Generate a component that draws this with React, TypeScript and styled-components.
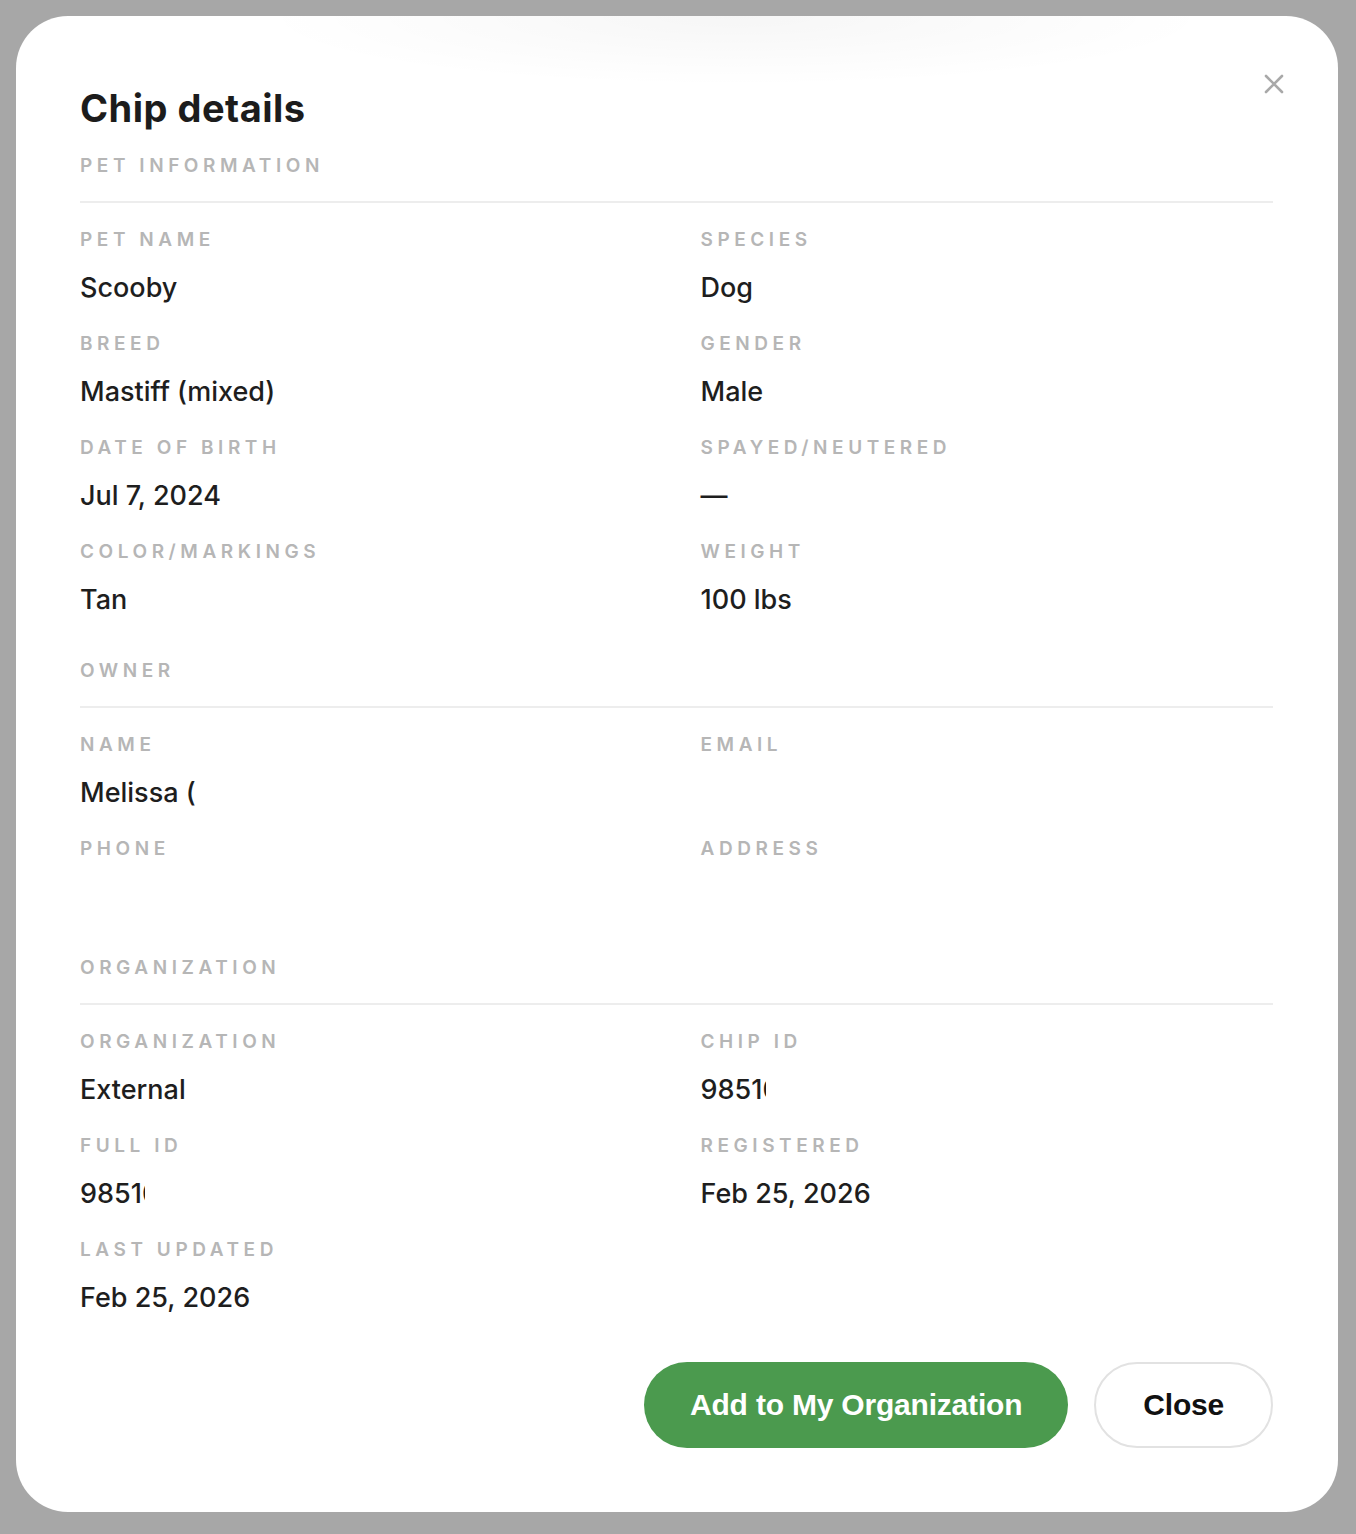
import React from "react";
import styled, { createGlobalStyle } from "styled-components";

const FONT = 'Inter, "Noto Sans", "Liberation Sans", sans-serif';
const BUTTON_FONT = '"Liberation Sans Narrow", "Liberation Sans", Arial, sans-serif';

const GlobalStyle = createGlobalStyle`
  html, body {
    margin: 0;
    padding: 0;
    background: #a7a7a7;
  }
  body {
    font-family: ${FONT};
    -webkit-font-smoothing: antialiased;
  }
`;

const Backdrop = styled.div`
  min-height: 1534px;
  box-sizing: border-box;
  padding: 16px 18px 22px 16px;
  background: #a7a7a7;
`;

const Modal = styled.div`
  position: relative;
  box-sizing: border-box;
  height: 1496px;
  padding: 70px 65px 64px 64px;
  border-radius: 52px;
  background:
    radial-gradient(ellipse 480px 70px at 720px 0px, rgba(0, 0, 0, 0.035), rgba(0, 0, 0, 0) 100%),
    #ffffff;
  display: flex;
  flex-direction: column;
`;

const CloseIcon = styled.button`
  position: absolute;
  top: 56px;
  right: 52px;
  width: 24px;
  height: 24px;
  padding: 0;
  border: none;
  background: none;
  color: #a9a9a9;
  cursor: pointer;
  display: flex;
  align-items: center;
  justify-content: center;
`;

const Title = styled.h2`
  margin: 0;
  font-size: 38px;
  line-height: 44px;
  font-weight: 700;
  color: #1c1c1c;
  letter-spacing: 0.5px;
`;

const Section = styled.section<{ $first?: boolean }>`
  margin-top: ${(p) => (p.$first ? "24px" : "43px")};
`;

const SectionTitle = styled.div`
  font-size: 19px;
  line-height: 24px;
  font-weight: 600;
  letter-spacing: 0.24em;
  color: #b6b6b6;
  text-transform: uppercase;
  padding-bottom: 23px;
  border-bottom: 2px solid #ededed;
`;

const Grid = styled.div`
  display: grid;
  grid-template-columns: 1fr 1fr;
  column-gap: 48px;
  row-gap: 28px;
  margin-top: 25px;
`;

const Field = styled.div`
  display: flex;
  flex-direction: column;
  gap: 20px;
`;

const Label = styled.div`
  font-size: 19px;
  line-height: 24px;
  font-weight: 600;
  letter-spacing: 0.24em;
  color: #b6b6b6;
  text-transform: uppercase;
`;

const Value = styled.div`
  font-size: 27px;
  line-height: 32px;
  min-height: 32px;
  font-weight: 500;
  color: #1e1e1e;
  white-space: nowrap;
`;

const Clipped = styled.span<{ $w: number }>`
  display: inline-block;
  overflow: hidden;
  vertical-align: top;
  max-width: ${(p) => p.$w}px;
`;

const Footer = styled.div`
  margin-top: auto;
  display: flex;
  justify-content: flex-end;
  gap: 26px;
`;

const Button = styled.button<{ $primary?: boolean }>`
  height: 86px;
  box-sizing: border-box;
  padding: 0 ${(p) => (p.$primary ? "46px" : "47px")};
  border-radius: 43px;
  font-family: ${BUTTON_FONT};
  font-size: 30px;
  font-weight: 700;
  letter-spacing: -0.2px;
  cursor: pointer;
  border: ${(p) => (p.$primary ? "none" : "2px solid #e2e2e2")};
  background: ${(p) => (p.$primary ? "#4b9a4e" : "#ffffff")};
  color: ${(p) => (p.$primary ? "#ffffff" : "#111111")};
`;

type Item = { label: string; value?: React.ReactNode };

const InfoSection: React.FC<{ title: string; items: Item[]; first?: boolean }> = ({
  title,
  items,
  first,
}) => (
  <Section $first={first}>
    <SectionTitle>{title}</SectionTitle>
    <Grid>
      {items.map((it) => (
        <Field key={it.label}>
          <Label>{it.label}</Label>
          <Value>{it.value}</Value>
        </Field>
      ))}
    </Grid>
  </Section>
);

const pet: Item[] = [
  { label: "Pet name", value: "Scooby" },
  { label: "Species", value: "Dog" },
  { label: "Breed", value: "Mastiff (mixed)" },
  { label: "Gender", value: "Male" },
  { label: "Date of birth", value: "Jul 7, 2024" },
  { label: "Spayed/Neutered", value: "—" },
  { label: "Color/Markings", value: "Tan" },
  { label: "Weight", value: "100 lbs" },
];

const owner: Item[] = [
  { label: "Name", value: <Clipped $w={116}>Melissa (</Clipped> },
  { label: "Email" },
  { label: "Phone" },
  { label: "Address" },
];

const org: Item[] = [
  { label: "Organization", value: "External" },
  { label: "Chip ID", value: <Clipped $w={65}>98510</Clipped> },
  { label: "Full ID", value: <Clipped $w={65}>98510</Clipped> },
  { label: "Registered", value: "Feb 25, 2026" },
  { label: "Last updated", value: "Feb 25, 2026" },
];

export default function App() {
  return (
    <>
      <GlobalStyle />
      <Backdrop>
        <Modal>
          <CloseIcon aria-label="Close">
            <svg width="22" height="22" viewBox="0 0 22 22" fill="none">
              <path d="M3 3L19 19M19 3L3 19" stroke="currentColor" strokeWidth="2.6" strokeLinecap="round" />
            </svg>
          </CloseIcon>
          <Title>Chip details</Title>
          <InfoSection first title="Pet Information" items={pet} />
          <InfoSection title="Owner" items={owner} />
          <InfoSection title="Organization" items={org} />
          <Footer>
            <Button $primary>Add to My Organization</Button>
            <Button>Close</Button>
          </Footer>
        </Modal>
      </Backdrop>
    </>
  );
}
